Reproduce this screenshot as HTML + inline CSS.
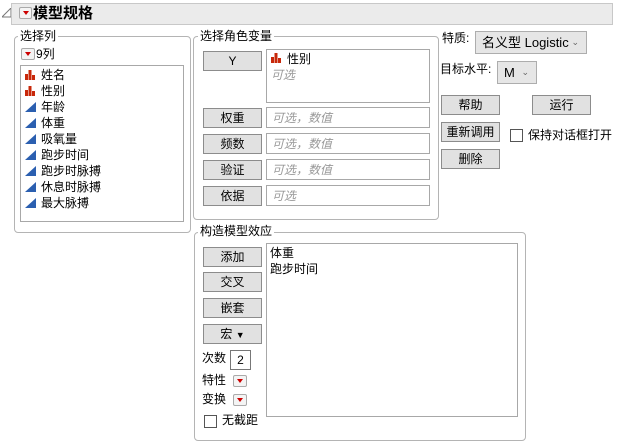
<!DOCTYPE html>
<html><head><meta charset="utf-8"><style>
*{box-sizing:border-box;margin:0;padding:0}
body{width:617px;height:446px;background:#fff;position:relative;overflow:hidden;font-family:"Liberation Sans","Noto Sans CJK SC",sans-serif;font-size:12px;color:#000}
.a{position:absolute;white-space:nowrap}
.grp{position:absolute;border:1px solid #b4b4b4;border-radius:4px}
.lab{position:absolute;background:#fff;padding:0 2px;font-size:12px;line-height:14px;white-space:nowrap}
.btn{position:absolute;width:59px;height:20px;background:#e1e1e1;border:1px solid #8c8c8c;text-align:center;line-height:18px;font-size:12px;white-space:nowrap}
.box{position:absolute;border:1px solid #a8a8a8;background:#fff}
.ph{color:#999;font-style:italic;font-size:12px;position:absolute;left:5px;top:2px;line-height:16px;white-space:nowrap}
.dd{position:absolute;width:14px;height:12px;border:1px solid #aaa;border-radius:2px;background:#f4f4f4}
.dd:after{content:"";position:absolute;left:3px;top:3px;border-left:3.5px solid transparent;border-right:3.5px solid transparent;border-top:4px solid #c00}
.it{position:absolute;left:0;width:150px;height:16px;line-height:16px;font-size:12px;padding-left:20px;white-space:nowrap}
.bar{position:absolute;left:4px;top:3px;width:11px;height:10px}
.cb{position:absolute;width:13px;height:13px;border:1px solid #555;background:#fff}
</style></head><body>
<svg class="a" style="left:2px;top:8px" width="10" height="10"><polygon points="9,0 9,9 0,9" fill="none" stroke="#777" stroke-width="1"/></svg>
<div class="a" style="left:11px;top:3px;width:602px;height:22px;background:#ebebeb;border:1px solid #c8c8c8"></div>
<div class="dd" style="left:19px;top:7px;width:13px;height:12px"></div>
<div class="a" style="left:33px;top:4px;font-size:15px;font-weight:bold;line-height:20px">模型规格</div>

<div class="grp" style="left:14px;top:36px;width:177px;height:197px"></div>
<div class="lab" style="left:18px;top:29px">选择列</div>
<div class="dd" style="left:21px;top:48px"></div>
<div class="a" style="left:36px;top:47px;line-height:14px">9列</div>
<div class="box" style="left:20px;top:65px;width:164px;height:157px"></div>

<div class="grp" style="left:193px;top:36px;width:246px;height:184px"></div>
<div class="lab" style="left:198px;top:29px">选择角色变量</div>
<div class="btn" style="left:203px;top:51px">Y</div>
<div class="box" style="left:266px;top:49px;width:164px;height:54px"></div>
<svg class="a" style="left:271px;top:53px" width="11" height="10"><rect x="0" y="4" width="3" height="6" fill="#c8280a"/><rect x="3.5" y="0" width="3" height="10" fill="#c8280a"/><rect x="7" y="5" width="3" height="5" fill="#c8280a"/></svg>
<div class="a" style="left:287px;top:51px;line-height:16px">性别</div>
<div class="a" style="left:271px;top:67px;color:#999;font-style:italic;line-height:16px;font-size:12px">可选</div>
<div class="btn" style="left:203px;top:108px">权重</div>
<div class="box" style="left:266px;top:107px;width:164px;height:21px"><span class="ph">可选，数值</span></div>
<div class="btn" style="left:203px;top:134px">频数</div>
<div class="box" style="left:266px;top:133px;width:164px;height:21px"><span class="ph">可选，数值</span></div>
<div class="btn" style="left:203px;top:160px">验证</div>
<div class="box" style="left:266px;top:159px;width:164px;height:21px"><span class="ph">可选，数值</span></div>
<div class="btn" style="left:203px;top:186px">依据</div>
<div class="box" style="left:266px;top:185px;width:164px;height:21px"><span class="ph">可选</span></div>

<div class="a" style="left:442px;top:30px;line-height:16px">特质:</div>
<div class="a" style="left:475px;top:31px;width:112px;height:23px;background:#e6e6e6;border:1px solid #adadad;line-height:21px;padding-left:6px;font-size:13px">名义型 Logistic<span style="position:absolute;right:7px;top:0;font-size:9px;color:#666">&#8964;</span></div>
<div class="a" style="left:440px;top:61px;line-height:16px">目标水平:</div>
<div class="a" style="left:497px;top:61px;width:40px;height:23px;background:#e6e6e6;border:1px solid #adadad;line-height:21px;padding-left:6px;font-size:13px">M<span style="position:absolute;right:7px;top:0;font-size:9px;color:#666">&#8964;</span></div>
<div class="btn" style="left:441px;top:95px">帮助</div>
<div class="btn" style="left:532px;top:95px">运行</div>
<div class="btn" style="left:441px;top:122px">重新调用</div>
<div class="cb" style="left:510px;top:129px"></div>
<div class="a" style="left:528px;top:127px;line-height:16px">保持对话框打开</div>
<div class="btn" style="left:441px;top:149px">删除</div>

<div class="grp" style="left:194px;top:232px;width:332px;height:209px"></div>
<div class="lab" style="left:198px;top:224px">构造模型效应</div>
<div class="btn" style="left:203px;top:247px">添加</div>
<div class="btn" style="left:203px;top:272px">交叉</div>
<div class="btn" style="left:203px;top:298px">嵌套</div>
<div class="btn" style="left:203px;top:324px">宏 <span style="font-size:9px">&#9660;</span></div>
<div class="box" style="left:266px;top:243px;width:252px;height:174px"></div>
<div class="a" style="left:270px;top:245px;line-height:16px">体重<br>跑步时间</div>
<div class="a" style="left:202px;top:350px;line-height:16px">次数</div>
<div class="a" style="left:230px;top:350px;width:21px;height:20px;border:1px solid #777;text-align:center;line-height:18px">2</div>
<div class="a" style="left:202px;top:372px;line-height:16px">特性</div>
<div class="dd" style="left:233px;top:375px"></div>
<div class="a" style="left:202px;top:391px;line-height:16px">变换</div>
<div class="dd" style="left:233px;top:394px"></div>
<div class="cb" style="left:204px;top:415px"></div>
<div class="a" style="left:222px;top:412px;line-height:16px">无截距</div>

<div class="a" style="left:21px;top:67px;width:160px;height:150px">
<div class="it" style="top:0"><svg class="bar" viewBox="0 0 11 10"><rect x="0" y="4" width="3" height="6" fill="#c8280a"/><rect x="3.5" y="0" width="3" height="10" fill="#c8280a"/><rect x="7" y="5" width="3" height="5" fill="#c8280a"/></svg>姓名</div>
<div class="it" style="top:16px"><svg class="bar" viewBox="0 0 11 10"><rect x="0" y="4" width="3" height="6" fill="#c8280a"/><rect x="3.5" y="0" width="3" height="10" fill="#c8280a"/><rect x="7" y="5" width="3" height="5" fill="#c8280a"/></svg>性别</div>
<div class="it" style="top:32px"><svg class="bar" viewBox="0 0 11 10"><polygon points="0,10 11,0 11,10" fill="#2b5fb0"/></svg>年龄</div>
<div class="it" style="top:48px"><svg class="bar" viewBox="0 0 11 10"><polygon points="0,10 11,0 11,10" fill="#2b5fb0"/></svg>体重</div>
<div class="it" style="top:64px"><svg class="bar" viewBox="0 0 11 10"><polygon points="0,10 11,0 11,10" fill="#2b5fb0"/></svg>吸氧量</div>
<div class="it" style="top:80px"><svg class="bar" viewBox="0 0 11 10"><polygon points="0,10 11,0 11,10" fill="#2b5fb0"/></svg>跑步时间</div>
<div class="it" style="top:96px"><svg class="bar" viewBox="0 0 11 10"><polygon points="0,10 11,0 11,10" fill="#2b5fb0"/></svg>跑步时脉搏</div>
<div class="it" style="top:112px"><svg class="bar" viewBox="0 0 11 10"><polygon points="0,10 11,0 11,10" fill="#2b5fb0"/></svg>休息时脉搏</div>
<div class="it" style="top:128px"><svg class="bar" viewBox="0 0 11 10"><polygon points="0,10 11,0 11,10" fill="#2b5fb0"/></svg>最大脉搏</div>
</div>
</body></html>
